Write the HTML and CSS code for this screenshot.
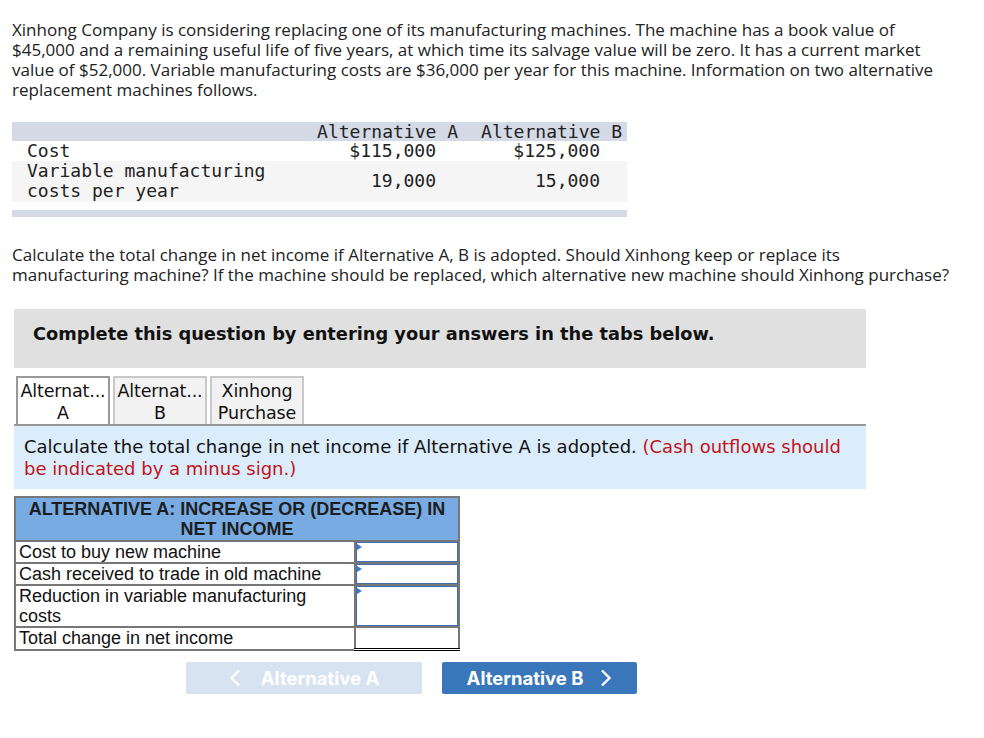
FILE: index.html
```html
<!DOCTYPE html>
<html>
<head>
<meta charset="utf-8">
<link rel="stylesheet" href="styles.css">
</head>
<body>
<div class="page">
  <p class="intro">Xinhong Company is considering replacing one of its manufacturing machines. The machine has a book value of $45,000 and a remaining useful life of five years, at which time its salvage value will be zero. It has a current market value of $52,000. Variable manufacturing costs are $36,000 per year for this machine. Information on two alternative replacement machines follows.</p>

  <div class="data">
    <div class="drow dhead">
      <div class="dlabel"></div>
      <div class="dcell">Alternative A</div>
      <div class="dcell">Alternative B</div>
    </div>
    <div class="drow">
      <div class="dlabel">Cost</div>
      <div class="dcell dval">$115,000</div>
      <div class="dcell dval">$125,000</div>
    </div>
    <div class="drow dalt">
      <div class="dlabel">Variable manufacturing<br>costs per year</div>
      <div class="dcell dval">19,000</div>
      <div class="dcell dval">15,000</div>
    </div>
  </div>
  <div class="dbar"></div>

  <p class="question">Calculate the total change in net income if Alternative A, B is adopted. Should Xinhong keep or replace its manufacturing machine? If the machine should be replaced, which alternative new machine should Xinhong purchase?</p>

  <div class="notice">Complete this question by entering your answers in the tabs below.</div>

  <div class="tabs">
    <div class="tab active">Alternat...<br>A</div>
    <div class="tab">Alternat...<br>B</div>
    <div class="tab">Xinhong<br>Purchase</div>
  </div>
  <div class="panel">Calculate the total change in net income if Alternative A is adopted. <span class="red">(Cash outflows should be indicated by a minus sign.)</span></div>

  <table class="answer">
    <tr><th colspan="2">ALTERNATIVE A: INCREASE OR (DECREASE) IN NET INCOME</th></tr>
    <tr><td class="lab">Cost to buy new machine</td><td class="inp"><div class="box"></div></td></tr>
    <tr><td class="lab">Cash received to trade in old machine</td><td class="inp"><div class="box"></div></td></tr>
    <tr class="tall"><td class="lab">Reduction in variable manufacturing costs</td><td class="inp"><div class="box"></div></td></tr>
    <tr><td class="lab">Total change in net income</td><td class="inp total"><div class="tbox"></div></td></tr>
  </table>

  <div class="nav">
    <div class="btn prev">
      <svg class="chev" width="12" height="18" viewBox="0 0 12 18"><path d="M10 1.5 L2.5 9 L10 16.5" fill="none" stroke="#fff" stroke-width="2.4"/></svg>
      <span>Alternative A</span>
    </div>
    <div class="btn next">
      <span>Alternative B</span>
      <svg class="chev" width="12" height="18" viewBox="0 0 12 18"><path d="M2 1.5 L9.5 9 L2 16.5" fill="none" stroke="#fff" stroke-width="2.4"/></svg>
    </div>
  </div>
</div>
</body>
</html>
```

FILE: styles.css
```css
html, body {
  margin: 0;
  padding: 0;
  background: #fff;
}
.page {
  padding: 20px 0 0 12px;
  width: 965px;
}
.intro, .question {
  font-family: "Open Sans", sans-serif;
  font-size: 17px;
  line-height: 20px;
  color: #222;
  margin: 0;
  width: 936px;
}
.data {
  margin-top: 22px;
  width: 615px;
  font-family: "DejaVu Sans Mono", monospace;
  font-size: 18px;
  line-height: 20px;
  color: #222;
}
.drow {
  display: grid;
  grid-template-columns: 1fr 164px 164px;
  align-items: center;
}
.dhead {
  background: #d4d9e6;
  height: 19px;
}
.dalt {
  background: #f5f5f5;
  padding: 0 0 1px;
}
.dlabel {
  padding-left: 15px;
}
.dcell {
  text-align: right;
  padding-right: 5px;
}
.dval {
  padding-right: 27px;
}
.dbar {
  margin-top: 8px;
  width: 615px;
  height: 7px;
  background: #d4d9e6;
}
.question {
  margin-top: 28px;
  width: 947px;
}
.notice {
  margin: 24px 0 0 2px;
  width: 852px;
  height: 59px;
  box-sizing: border-box;
  background: #e0e0e0;
  font-family: "DejaVu Sans", Verdana, sans-serif;
  font-weight: bold;
  font-size: 17.8px;
  line-height: 22px;
  padding: 14px 0 0 19px;
  color: #111;
}
.tabs {
  display: flex;
  gap: 3px;
  margin: 8px 0 0 4px;
}
.tab {
  width: 94px;
  height: 48px;
  box-sizing: border-box;
  border: 2px solid #c8c8c8;
  border-bottom: none;
  background: #f2f2f2;
  font-family: "DejaVu Sans", Verdana, sans-serif;
  font-size: 17.5px;
  line-height: 22px;
  text-align: center;
  color: #111;
  padding-top: 2px;
  letter-spacing: -0.15px;
  white-space: nowrap;
  overflow: hidden;
}
.tab.active {
  background: #fff;
  border-color: #999;
}
.panel {
  margin-left: 2px;
  width: 852px;
  box-sizing: border-box;
  border-top: 2px solid #999;
  background: #dbedfa;
  padding: 10px 20px 9px 10px;
  font-family: "DejaVu Sans", Verdana, sans-serif;
  font-size: 18px;
  line-height: 22px;
  color: #111;
}
.red {
  color: #c0141a;
}
.answer {
  margin: 7px 0 0 2px;
  border-collapse: collapse;
  width: 446px;
  font-family: "Liberation Sans", Arial, sans-serif;
  font-size: 18px;
  color: #111;
}
.answer th {
  background: #78abe2;
  border: 2px solid #777;
  font-weight: bold;
  line-height: 20px;
  padding: 1px 8px;
  color: #1d1d1d;
}
.answer td {
  border: 2px solid #777;
  padding: 0;
  vertical-align: top;
}
.answer td.lab {
  width: 334px;
  padding: 0 4px 0 3px;
  line-height: 20px;
  background: #fff;
}
.answer td.inp {
  width: 104px;
  background: #fff;
  padding: 0;
}
.box {
  position: relative;
  height: 18px;
  border: 1px solid #3f6fae;
}
.tall .box {
  height: 38px;
}
.box::before {
  content: "";
  position: absolute;
  left: 0;
  top: 1px;
  border-left: 5px solid #3a78c8;
  border-top: 3px solid transparent;
  border-bottom: 3px solid transparent;
}
.answer td.total {
  border-top: 2px solid #000;
  border-bottom: 3px double #000;
}
.tbox {
  height: 20px;
}
.nav {
  display: flex;
  gap: 20px;
  margin: 11px 0 0 174px;
}
.btn {
  height: 32px;
  border-radius: 2px;
  display: flex;
  align-items: center;
  justify-content: center;
  gap: 20px;
  font-family: Inter, Roboto, sans-serif;
  font-weight: bold;
  font-size: 18.5px;
  color: #fff;
}
.prev {
  width: 236px;
  background: #d7e3f1;
}
.next {
  width: 195px;
  background: #3a77ba;
  gap: 17px;
}
.chev {
  display: block;
}
```
